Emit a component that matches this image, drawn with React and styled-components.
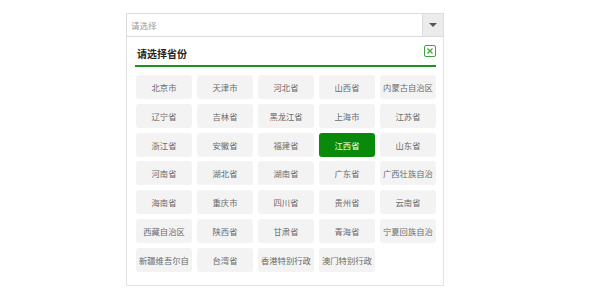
import styled, { createGlobalStyle } from "styled-components";

const GlobalStyle = createGlobalStyle`
    body {
        margin: 0;
        background: #fff;
        font-family: "Noto Sans CJK SC", "Noto Sans", sans-serif;
    }
`;

const Page = styled.div`
    padding: 13px 0 0 126px;
`;

const Select = styled.div`
    width: 318px;
`;

const Field = styled.div`
    display: flex;
    height: 24px;
    box-sizing: border-box;
    border: 1px solid #dcdcdc;
`;

const Placeholder = styled.div`
    flex: 1;
    padding-left: 4px;
    font-size: 8.5px;
    line-height: 22px;
    color: #999;
`;

const Arrow = styled.div`
    width: 20px;
    display: flex;
    align-items: center;
    justify-content: center;
    background: #ececec;
    border-left: 1px solid #dcdcdc;
    &::after {
        content: "";
        border-left: 4.5px solid transparent;
        border-right: 4.5px solid transparent;
        border-top: 4.5px solid #555;
    }
`;

const Panel = styled.div`
    box-sizing: border-box;
    border: 1px solid #e2e2e2;
    border-top: none;
    padding: 0 7px 13px 9px;
`;

const Header = styled.div`
    display: flex;
    justify-content: space-between;
    align-items: flex-start;
    padding: 8px 0 4px 2px;
    margin-left: -1px;
    border-bottom: 2px solid #1c941c;
`;

const Title = styled.div`
    margin-top: 2px;
    font-size: 10px;
    line-height: 14px;
    font-weight: bold;
    color: #222;
`;

const Close = styled.div`
    width: 12px;
    height: 12px;
    box-sizing: border-box;
    border: 1px solid #3aa53a;
    border-radius: 2px;
    display: flex;
    align-items: center;
    justify-content: center;
`;

const Grid = styled.div`
    display: grid;
    grid-template-columns: repeat(5, minmax(0, 1fr));
    grid-auto-rows: 24px;
    column-gap: 5px;
    row-gap: 4.75px;
    margin-top: 8px;
`;

const Item = styled.div`
    min-width: 0;
    border-radius: 3px;
    padding: 0 3px;
    text-align: center;
    font-size: 8.3px;
    line-height: 24px;
    background: ${(p) => (p.$active ? "#0a8a0a" : "#f3f3f3")};
    color: ${(p) => (p.$active ? "#fff" : "#6a6a6a")};
`;

const Label = styled.span`
    display: block;
    overflow: hidden;
    white-space: nowrap;
`;

const provinces = [
    "北京市", "天津市", "河北省", "山西省", "内蒙古自治区",
    "辽宁省", "吉林省", "黑龙江省", "上海市", "江苏省",
    "浙江省", "安徽省", "福建省", "江西省", "山东省",
    "河南省", "湖北省", "湖南省", "广东省", "广西壮族自治区",
    "海南省", "重庆市", "四川省", "贵州省", "云南省",
    "西藏自治区", "陕西省", "甘肃省", "青海省", "宁夏回族自治区",
    "新疆维吾尔自治区", "台湾省", "香港特别行政区", "澳门特别行政区",
];

const App = () => {
    return (
        <Page>
            <GlobalStyle />
            <Select>
                <Field>
                    <Placeholder>请选择</Placeholder>
                    <Arrow />
                </Field>
                <Panel>
                    <Header>
                        <Title>请选择省份</Title>
                        <Close>
                            <svg width="6" height="6" viewBox="0 0 6 6">
                                <path d="M0.5 0.5L5.5 5.5M5.5 0.5L0.5 5.5" stroke="#3aa53a" strokeWidth="1.2" />
                            </svg>
                        </Close>
                    </Header>
                    <Grid>
                        {provinces.map((name) => (
                            <Item key={name} $active={name === "江西省"}>
                                <Label>{name}</Label>
                            </Item>
                        ))}
                    </Grid>
                </Panel>
            </Select>
        </Page>
    );
};

export default App;
